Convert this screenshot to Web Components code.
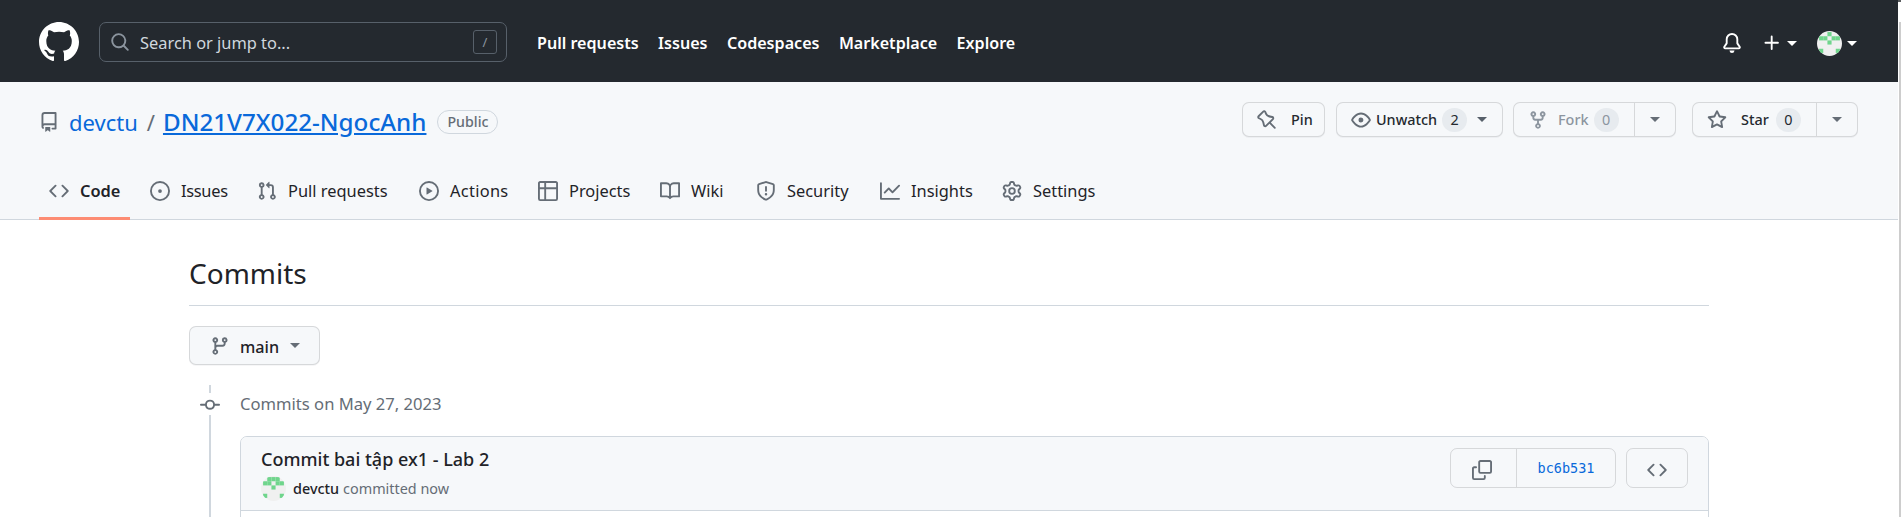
<!DOCTYPE html>
<html lang="en">
<head>
<meta charset="utf-8">
<title>Commits</title>
<style>
  html, body { margin: 0; height: 517px; overflow: hidden; background: #fff; }
  body { font-family: "Noto Sans", sans-serif; color: #1f2328; }
</style>
</head>
<body>
<gh-app>
  <gh-header></gh-header>
  <gh-repohead></gh-repohead>
  <gh-commits></gh-commits>
</gh-app>

<script>
const ICONS = {
  mark: 'M8 0c4.42 0 8 3.58 8 8a8.013 8.013 0 0 1-5.45 7.59c-.4.08-.55-.17-.55-.38 0-.27.01-1.13.01-2.2 0-.75-.25-1.23-.54-1.48 1.78-.2 3.65-.88 3.65-3.95 0-.88-.31-1.59-.82-2.15.08-.2.36-1.02-.08-2.12 0 0-.67-.22-2.2.82-.64-.18-1.32-.27-2-.27-.68 0-1.36.09-2 .27-1.53-1.03-2.2-.82-2.2-.82-.44 1.1-.16 1.92-.08 2.12-.51.56-.82 1.28-.82 2.15 0 3.06 1.86 3.75 3.64 3.95-.23.2-.44.55-.51 1.07-.46.21-1.61.55-2.33-.66-.15-.24-.6-.83-1.23-.82-.67.01-.27.38.01.53.34.19.73.9.82 1.13.16.45.68 1.31 2.69.94 0 .67.01 1.3.01 1.49 0 .21-.15.45-.55.38A7.995 7.995 0 0 1 0 8c0-4.42 3.58-8 8-8Z',
  repo: 'M2 2.5A2.5 2.5 0 0 1 4.5 0h8.75a.75.75 0 0 1 .75.75v12.5a.75.75 0 0 1-.75.75h-2.5a.75.75 0 0 1 0-1.5h1.75v-2h-8a1 1 0 0 0-.714 1.7.75.75 0 1 1-1.072 1.05A2.495 2.495 0 0 1 2 11.5Zm10.5-1h-8a1 1 0 0 0-1 1v6.708A2.486 2.486 0 0 1 4.5 9h8ZM5 12.25a.25.25 0 0 1 .25-.25h3.5a.25.25 0 0 1 .25.25v3.25a.25.25 0 0 1-.4.2l-1.45-1.087a.249.249 0 0 0-.3 0L5.4 15.7a.25.25 0 0 1-.4-.2Z',
  code: 'm11.28 3.22 4.25 4.25a.75.75 0 0 1 0 1.06l-4.25 4.25a.749.749 0 0 1-1.275-.326.749.749 0 0 1 .215-.734L13.94 8l-3.72-3.72a.749.749 0 0 1 .326-1.275.749.749 0 0 1 .734.215Zm-6.56 0a.751.751 0 0 1 1.042.018.751.751 0 0 1 .018 1.042L2.06 8l3.72 3.72a.749.749 0 0 1-.326 1.275.749.749 0 0 1-.734-.215L.47 8.53a.75.75 0 0 1 0-1.06Z',
  issue: 'M8 9.5a1.5 1.5 0 1 0 0-3 1.5 1.5 0 0 0 0 3ZM8 0a8 8 0 1 1 0 16A8 8 0 0 1 8 0ZM1.5 8a6.5 6.5 0 1 0 13 0 6.5 6.5 0 0 0-13 0Z',
  pr: 'M1.5 3.25a2.25 2.25 0 1 1 3 2.122v5.256a2.251 2.251 0 1 1-1.5 0V5.372A2.25 2.25 0 0 1 1.5 3.25Zm5.677-.177L9.573.677A.25.25 0 0 1 10 .854V2.5h1A2.5 2.5 0 0 1 13.5 5v5.628a2.251 2.251 0 1 1-1.5 0V5a1 1 0 0 0-1-1h-1v1.646a.25.25 0 0 1-.427.177L7.177 3.427a.25.25 0 0 1 0-.354ZM3.75 2.5a.75.75 0 1 0 0 1.5.75.75 0 0 0 0-1.5Zm0 9.5a.75.75 0 1 0 0 1.5.75.75 0 0 0 0-1.5Zm8.25.75a.75.75 0 1 0 1.5 0 .75.75 0 0 0-1.5 0Z',
  play: 'M8 0a8 8 0 1 1 0 16A8 8 0 0 1 8 0ZM1.5 8a6.5 6.5 0 1 0 13 0 6.5 6.5 0 0 0-13 0Zm4.879-2.773 4.264 2.559a.25.25 0 0 1 0 .428l-4.264 2.559A.25.25 0 0 1 6 10.559V5.442a.25.25 0 0 1 .379-.215Z',
  table: 'M0 1.75C0 .784.784 0 1.75 0h12.5C15.216 0 16 .784 16 1.75v12.5A1.75 1.75 0 0 1 14.25 16H1.75A1.75 1.75 0 0 1 0 14.25ZM6.5 6.5v8h7.75a.25.25 0 0 0 .25-.25V6.5Zm8-1.5V1.75a.25.25 0 0 0-.25-.25H6.5V5Zm-13 1.5v7.75c0 .138.112.25.25.25H5v-8ZM5 5V1.5H1.75a.25.25 0 0 0-.25.25V5Z',
  book: 'M0 1.75A.75.75 0 0 1 .75 1h4.253c1.227 0 2.317.59 3 1.501A3.743 3.743 0 0 1 11.006 1h4.245a.75.75 0 0 1 .75.75v10.5a.75.75 0 0 1-.75.75h-4.507a2.25 2.25 0 0 0-1.591.659l-.622.621a.75.75 0 0 1-1.06 0l-.622-.621A2.25 2.25 0 0 0 5.258 13H.75a.75.75 0 0 1-.75-.75Zm7.251 10.324.004-5.073-.002-2.253A2.25 2.25 0 0 0 5.003 2.5H1.5v9h3.757a3.75 3.75 0 0 1 1.994.574ZM8.755 4.75l-.004 7.322a3.752 3.752 0 0 1 1.992-.572H14.5v-9h-3.495a2.25 2.25 0 0 0-2.25 2.25Z',
  shield: 'M7.467.133a1.748 1.748 0 0 1 1.066 0l5.25 1.68A1.75 1.75 0 0 1 15 3.48V7c0 1.566-.32 3.182-1.303 4.682-.983 1.498-2.585 2.813-5.032 3.855a1.697 1.697 0 0 1-1.33 0c-2.447-1.042-4.049-2.357-5.032-3.855C1.32 10.182 1 8.566 1 7V3.48a1.75 1.75 0 0 1 1.217-1.667Zm.61 1.429a.25.25 0 0 0-.153 0l-5.25 1.68a.25.25 0 0 0-.174.238V7c0 1.358.275 2.666 1.057 3.86.784 1.194 2.121 2.34 4.366 3.297a.196.196 0 0 0 .154 0c2.245-.956 3.582-2.104 4.366-3.298C13.225 9.666 13.5 8.36 13.5 7V3.48a.251.251 0 0 0-.174-.237l-5.25-1.68ZM8.75 4.75v3a.75.75 0 0 1-1.5 0v-3a.75.75 0 0 1 1.5 0ZM9 10.5a1 1 0 1 1-2 0 1 1 0 0 1 2 0Z',
  graph: 'M1.5 1.75V13.5h13.75a.75.75 0 0 1 0 1.5H.75a.75.75 0 0 1-.75-.75V1.75a.75.75 0 0 1 1.5 0Zm14.28 2.53-5.25 5.25a.75.75 0 0 1-1.06 0L7 7.06 4.28 9.78a.751.751 0 0 1-1.042-.018.751.751 0 0 1-.018-1.042l3.25-3.25a.75.75 0 0 1 1.06 0L10 7.94l4.72-4.72a.751.751 0 0 1 1.042.018.751.751 0 0 1 .018 1.042Z',
  gear: 'M8 0a8.2 8.2 0 0 1 .701.031C9.444.095 9.99.645 10.16 1.29l.288 1.107c.018.066.079.158.212.224.231.114.454.243.668.386.123.082.233.09.299.071l1.103-.303c.644-.176 1.392.021 1.82.63.27.385.506.792.704 1.218.315.675.111 1.422-.364 1.891l-.814.806c-.049.048-.098.147-.088.294.016.257.016.515 0 .772-.01.147.038.246.088.294l.814.806c.475.469.679 1.216.364 1.891a7.977 7.977 0 0 1-.704 1.217c-.428.61-1.176.807-1.82.63l-1.102-.302c-.067-.019-.177-.011-.3.071a5.909 5.909 0 0 1-.668.386c-.133.066-.194.158-.211.224l-.29 1.106c-.168.646-.715 1.196-1.458 1.26a8.006 8.006 0 0 1-1.402 0c-.743-.064-1.289-.614-1.458-1.26l-.289-1.106c-.018-.066-.079-.158-.212-.224a5.738 5.738 0 0 1-.668-.386c-.123-.082-.233-.09-.299-.071l-1.103.303c-.644.176-1.392-.021-1.82-.63a8.12 8.12 0 0 1-.704-1.218c-.315-.675-.111-1.422.363-1.891l.815-.806c.05-.048.098-.147.088-.294a6.214 6.214 0 0 1 0-.772c.01-.147-.038-.246-.088-.294l-.815-.806C.635 6.045.431 5.298.746 4.623a7.92 7.92 0 0 1 .704-1.217c.428-.61 1.176-.807 1.82-.63l1.102.302c.067.019.177.011.3-.071.214-.143.437-.272.668-.386.133-.066.194-.158.211-.224l.29-1.106C6.009.645 6.556.095 7.299.03 7.53.01 7.764 0 8 0Zm-.571 1.525c-.036.003-.108.036-.137.146l-.289 1.105c-.147.561-.549.967-.998 1.189-.173.086-.34.183-.5.29-.417.278-.97.423-1.529.27l-1.103-.303c-.109-.03-.175.016-.195.045-.22.312-.412.644-.573.99-.014.031-.021.11.059.19l.815.806c.411.406.562.957.53 1.456a4.709 4.709 0 0 0 0 .582c.032.499-.119 1.05-.53 1.456l-.815.806c-.081.08-.073.159-.059.19.162.346.353.677.573.989.02.03.085.076.195.046l1.102-.303c.56-.153 1.113-.008 1.53.27.161.107.328.204.501.29.447.222.85.629.997 1.189l.289 1.105c.029.109.101.143.137.146a6.6 6.6 0 0 0 1.142 0c.036-.003.108-.036.137-.146l.289-1.105c.147-.561.549-.967.998-1.189.173-.086.34-.183.5-.29.417-.278.97-.423 1.529-.27l1.103.303c.109.029.175-.016.195-.045.22-.313.411-.644.573-.99.014-.031.021-.11-.059-.19l-.815-.806c-.411-.406-.562-.957-.53-1.456a4.709 4.709 0 0 0 0-.582c-.032-.499.119-1.05.53-1.456l.815-.806c.081-.08.073-.159.059-.19a6.464 6.464 0 0 0-.573-.989c-.02-.03-.085-.076-.195-.046l-1.102.303c-.56.153-1.113.008-1.53-.27a4.44 4.44 0 0 0-.501-.29c-.447-.222-.85-.629-.997-1.189l-.289-1.105c-.029-.11-.101-.143-.137-.146a6.6 6.6 0 0 0-1.142 0ZM11 8a3 3 0 1 1-6 0 3 3 0 0 1 6 0ZM9.5 8a1.5 1.5 0 1 0-3.001.001A1.5 1.5 0 0 0 9.5 8Z',
  pin: 'M4.456.734a1.75 1.75 0 0 1 2.826.504l.613 1.327a3.081 3.081 0 0 0 2.084 1.707l2.454.584c1.332.317 1.8 1.972.832 2.94L11.06 10l3.72 3.72a.748.748 0 0 1-.332 1.265.75.75 0 0 1-.729-.205L10 11.06l-2.204 2.205c-.968.968-2.623.5-2.94-.832l-.584-2.454a3.081 3.081 0 0 0-1.707-2.084l-1.327-.613a1.75 1.75 0 0 1-.504-2.826L4.456.734ZM5.92 1.866a.25.25 0 0 0-.404-.072L1.794 5.516a.25.25 0 0 0 .072.404l1.328.613A4.582 4.582 0 0 1 5.73 9.63l.584 2.454a.25.25 0 0 0 .42.12l5.47-5.47a.25.25 0 0 0-.12-.42L9.63 6.03a4.582 4.582 0 0 1-3.098-2.537Z',
  eye: 'M8 2c1.981 0 3.671.992 4.933 2.078 1.27 1.091 2.187 2.345 2.637 3.023a1.62 1.62 0 0 1 0 1.798c-.45.678-1.367 1.932-2.637 3.023C11.67 13.008 9.981 14 8 14c-1.981 0-3.671-.992-4.933-2.078C1.797 10.83.88 9.576.43 8.898a1.62 1.62 0 0 1 0-1.798c.45-.677 1.367-1.931 2.637-3.022C4.33 2.992 6.019 2 8 2ZM1.679 7.932a.12.12 0 0 0 0 .136c.411.622 1.241 1.75 2.366 2.717C5.176 11.758 6.527 12.5 8 12.5c1.473 0 2.825-.742 3.955-1.715 1.124-.967 1.954-2.096 2.366-2.717a.12.12 0 0 0 0-.136c-.412-.621-1.242-1.75-2.366-2.717C10.824 4.242 9.473 3.5 8 3.5c-1.473 0-2.825.742-3.955 1.715-1.124.967-1.954 2.096-2.366 2.717ZM8 10a2 2 0 1 1-.001-3.999A2 2 0 0 1 8 10Z',
  fork: 'M5 5.372v.878c0 .414.336.75.75.75h4.5a.75.75 0 0 0 .75-.75v-.878a2.25 2.25 0 1 1 1.5 0v.878a2.25 2.25 0 0 1-2.25 2.25h-1.5v2.128a2.251 2.251 0 1 1-1.5 0V8.5h-1.5A2.25 2.25 0 0 1 3.5 6.25v-.878a2.25 2.25 0 1 1 1.5 0ZM5 3.25a.75.75 0 1 0-1.5 0 .75.75 0 0 0 1.5 0Zm6.75.75a.75.75 0 1 0 0-1.5.75.75 0 0 0 0 1.5Zm-3 8.75a.75.75 0 1 0-1.5 0 .75.75 0 0 0 1.5 0Z',
  star: 'M8 .25a.75.75 0 0 1 .673.418l1.882 3.815 4.21.612a.75.75 0 0 1 .416 1.279l-3.046 2.97.719 4.192a.751.751 0 0 1-1.088.791L8 12.347l-3.766 1.98a.75.75 0 0 1-1.088-.79l.72-4.194L.818 6.374a.75.75 0 0 1 .416-1.28l4.21-.611L7.327.668A.75.75 0 0 1 8 .25Zm0 2.445L6.615 5.5a.75.75 0 0 1-.564.41l-3.097.45 2.24 2.184a.75.75 0 0 1 .216.664l-.528 3.084 2.769-1.456a.75.75 0 0 1 .698 0l2.77 1.456-.53-3.084a.75.75 0 0 1 .216-.664l2.24-2.183-3.096-.45a.75.75 0 0 1-.564-.41L8 2.694Z',
  branch: 'M9.5 3.25a2.25 2.25 0 1 1 3 2.122V6A2.5 2.5 0 0 1 10 8.5H6a1 1 0 0 0-1 1v1.128a2.251 2.251 0 1 1-1.5 0V5.372a2.25 2.25 0 1 1 1.5 0v1.836A2.493 2.493 0 0 1 6 7h4a1 1 0 0 0 1-1v-.628A2.25 2.25 0 0 1 9.5 3.25Zm-6 0a.75.75 0 1 0 1.5 0 .75.75 0 0 0-1.5 0Zm8.25-.75a.75.75 0 1 0 0 1.5.75.75 0 0 0 0-1.5ZM4.25 12a.75.75 0 1 0 0 1.5.75.75 0 0 0 0-1.5Z',
  commit: 'M11.93 8.5a4.002 4.002 0 0 1-7.86 0H.75a.75.75 0 0 1 0-1.5h3.32a4.002 4.002 0 0 1 7.86 0h3.32a.75.75 0 0 1 0 1.5Zm-1.43-.75a2.5 2.5 0 1 0-5 0 2.5 2.5 0 0 0 5 0Z',
  copy: 'M0 6.75C0 5.784.784 5 1.75 5h1.5a.75.75 0 0 1 0 1.5h-1.5a.25.25 0 0 0-.25.25v7.5c0 .138.112.25.25.25h7.5a.25.25 0 0 0 .25-.25v-1.5a.75.75 0 0 1 1.5 0v1.5A1.75 1.75 0 0 1 9.25 16h-7.5A1.75 1.75 0 0 1 0 14.25ZM5 1.75C5 .784 5.784 0 6.75 0h7.5C15.216 0 16 .784 16 1.75v7.5A1.75 1.75 0 0 1 14.25 11h-7.5A1.75 1.75 0 0 1 5 9.25Zm1.75-.25a.25.25 0 0 0-.25.25v7.5c0 .138.112.25.25.25h7.5a.25.25 0 0 0 .25-.25v-7.5a.25.25 0 0 0-.25-.25Z',
  bell: 'M8 16a2 2 0 0 0 1.985-1.75c.017-.137-.097-.25-.235-.25h-3.5c-.138 0-.252.113-.235.25A2 2 0 0 0 8 16ZM3 5a5 5 0 0 1 10 0v2.947c0 .05.015.098.042.139l1.703 2.555A1.519 1.519 0 0 1 13.482 13H2.518a1.516 1.516 0 0 1-1.263-2.36l1.703-2.554A.255.255 0 0 0 3 7.947Zm5-3.5A3.5 3.5 0 0 0 4.5 5v2.947c0 .346-.102.683-.294.97l-1.703 2.556a.017.017 0 0 0-.003.01l.001.006c0 .002.002.004.004.006l.006.004.007.001h10.964l.007-.001.006-.004.004-.006.001-.007a.017.017 0 0 0-.003-.01l-1.703-2.554a1.745 1.745 0 0 1-.294-.97V5A3.5 3.5 0 0 0 8 1.5Z',
  plus: 'M7.75 2a.75.75 0 0 1 .75.75V7h4.25a.75.75 0 0 1 0 1.5H8.5v4.25a.75.75 0 0 1-1.5 0V8.5H2.75a.75.75 0 0 1 0-1.5H7V2.75A.75.75 0 0 1 7.75 2Z',
  search: 'M10.68 11.74a6 6 0 0 1-7.922-8.982 6 6 0 0 1 8.982 7.922l3.04 3.04a.749.749 0 0 1-.326 1.275.749.749 0 0 1-.734-.215ZM11.5 7a4.499 4.499 0 1 0-8.997 0A4.499 4.499 0 0 0 11.5 7Z'
};

// small helper, every component here is just a shadow root + innerHTML
class Base extends HTMLElement {
  constructor() {
    super();
    this.attachShadow({ mode: 'open' });
  }
}

class GhIcon extends Base {
  connectedCallback() {
    const size = this.getAttribute('size') || 20;
    this.shadowRoot.innerHTML = `
      <style>:host { display: inline-flex; flex: none; } svg { display: block; fill: currentColor; }</style>
      <svg width="${size}" height="${size}" viewBox="0 0 16 16"><path d="${ICONS[this.getAttribute('name')]}"/></svg>`;
  }
}

class GhCaret extends Base {
  connectedCallback() {
    this.shadowRoot.innerHTML = `
      <style>
        :host { display: inline-block; flex: none; width: 0; height: 0;
          border-top: 5px solid currentColor; border-left: 5px solid transparent; border-right: 5px solid transparent; }
      </style>`;
  }
}

class GhAvatar extends Base {
  connectedCallback() {
    const size = this.getAttribute('size') || 25;
    // identicon cells, sits a bit high in the circle like the reference
    const cells = [[2,0],[0,1],[1,1],[3,1],[4,1],[2,2],[0,4],[4,4]];
    if (this.hasAttribute('wide')) cells.push([1,0],[3,0]);
    const rects = cells.map(([c, r]) => `<rect x="${35 + c * 70}" y="${18 + r * 70}" width="70" height="70"/>`).join('');
    this.shadowRoot.innerHTML = `
      <style>
        :host { display: inline-flex; flex: none; }
        svg { display: block; border-radius: 50%; background: #f0f0f0; fill: #6fd58c; }
      </style>
      <svg width="${size}" height="${size}" viewBox="0 0 420 420">${rects}</svg>`;
  }
}

class GhHeader extends Base {
  connectedCallback() {
    const links = ['Pull requests', 'Issues', 'Codespaces', 'Marketplace', 'Explore'];
    this.shadowRoot.innerHTML = `
      <style>
        :host { display: flex; align-items: center; box-sizing: border-box; height: 82px;
          padding: 2px 41px 0 39px; background: #24292f; color: #fff; }
        .search { display: flex; align-items: center; box-sizing: border-box; width: 408px; height: 40px;
          margin-left: 20px; padding: 0 9px 0 10px; border: 1px solid #57606a; border-radius: 7px; color: #d0d7de; }
        .search gh-icon { color: #8b949e; }
        .search span { flex: 1; margin-left: 10px; font-size: 16.4px; }
        kbd { display: flex; align-items: center; justify-content: center; box-sizing: border-box; width: 24px; height: 24px;
          border: 1px solid #57606a; border-radius: 3px; color: #8b949e; font: 13px "Noto Sans", sans-serif; }
        nav { display: flex; gap: 19.4px; margin-left: 30px; padding-top: 1px; font-size: 16.1px; font-weight: 600; }
        .right { display: flex; align-items: center; margin-left: auto; padding-top: 2px; }
        .plus { margin-left: 20px; }
        .c1 { margin-left: 5px; }
        .avatar { margin-left: 20px; }
        .c2 { margin-left: 5px; }
      </style>
      <gh-icon name="mark" size="40"></gh-icon>
      <div class="search">
        <gh-icon name="search" size="20"></gh-icon>
        <span>Search or jump to...</span>
        <kbd>/</kbd>
      </div>
      <nav>${links.map(l => `<span>${l}</span>`).join('')}</nav>
      <div class="right">
        <gh-icon name="bell"></gh-icon>
        <gh-icon class="plus" name="plus"></gh-icon>
        <gh-caret class="c1"></gh-caret>
        <gh-avatar class="avatar"></gh-avatar>
        <gh-caret class="c2"></gh-caret>
      </div>`;
  }
}

// button with optional counter and optional split caret
class GhButton extends Base {
  connectedCallback() {
    const icon = this.getAttribute('icon');
    const count = this.getAttribute('count');
    const split = this.hasAttribute('split');
    const caret = this.hasAttribute('caret');
    const gap = this.getAttribute('gap') || 10;
    this.shadowRoot.innerHTML = `
      <style>
        :host { display: inline-flex; box-sizing: border-box; height: 35px; border: 1px solid rgba(31,35,40,.15);
          border-radius: 7px; background: #f6f8fa; box-shadow: 0 1px 0 rgba(31,35,40,.04);
          font-size: 14.4px; font-weight: 500; color: #24292f; }
        :host([disabled]) .main { color: #8c959f; }
        .main { display: flex; align-items: center; flex: 1; padding: 0 12px 0 14px; }
        gh-icon { color: #656d76; margin-right: ${gap}px; }
        :host([disabled]) gh-icon { color: #8c959f; }
        .count { display: flex; align-items: center; justify-content: center; width: 25px; height: 24px; margin-left: var(--count-gap, 7px);
          border-radius: 12px; background: rgba(175,184,193,.2); font-weight: 400; }
        .more { display: flex; align-items: center; justify-content: center; width: 40px; border-left: 1px solid rgba(31,35,40,.15); color: #656d76; }
        .inline { margin-left: 10px; color: #57606a; }
      </style>
      <div class="main">
        <gh-icon name="${icon}"></gh-icon><span>${this.getAttribute('label')}</span>
        ${count ? `<span class="count">${count}</span>` : ''}
        ${caret ? '<gh-caret class="inline"></gh-caret>' : ''}
      </div>
      ${split ? '<div class="more"><gh-caret></gh-caret></div>' : ''}`;
  }
}

class GhTab extends Base {
  connectedCallback() {
    // w = label box width, the tab row keeps the reference spacing with it
    this.shadowRoot.innerHTML = `
      <style>
        :host { display: flex; align-items: center; box-sizing: border-box; height: 41px; gap: 11px;
          padding: 0 10px 14px; border-bottom: 3px solid transparent; font-size: 16.4px; color: #1f2328; }
        :host([active]) { border-bottom-color: #fd8c73; font-weight: 600; }
        gh-icon { color: #656d76; }
        .label { width: ${this.getAttribute('w')}px; margin-bottom: 2px; white-space: nowrap; letter-spacing: ${this.getAttribute('ls') || 0}px; }
      </style>
      <gh-icon name="${this.getAttribute('icon')}"></gh-icon><span class="label"><slot></slot></span>`;
  }
}

class GhRepohead extends Base {
  connectedCallback() {
    this.shadowRoot.innerHTML = `
      <style>
        :host { display: block; box-sizing: border-box; height: 138px; padding-top: 20px;
          background: #f6f8fa; border-bottom: 1px solid #d0d7de; }
        .top { display: flex; justify-content: space-between; height: 35px; padding: 0 40px 0 39px; }
        .title { display: flex; align-items: center; padding-top: 4px; font-size: 22px; color: #656d76; }
        .title gh-icon { margin-right: 10px; }
        a { color: #0969da; text-decoration: none; }
        a.repo { font-size: 24.2px; font-weight: 500; text-decoration: underline; }
        .sep { margin: 0 8px 0 9px; }
        .badge { margin-left: 11px; padding: 0 9px; border: 1px solid #d0d7de; border-radius: 13px;
          font-size: 14.2px; line-height: 22px; font-weight: 500; color: #656d76; }
        .actions { display: flex; gap: 10px; }
        .watch { margin-left: 1px; }
        .star { margin-left: 6px; }
        nav { display: flex; gap: 10px; margin-top: 42px; padding-left: 39px; }
      </style>
      <div class="top">
        <div class="title">
          <gh-icon name="repo"></gh-icon>
          <a href="#">devctu</a><span class="sep">/</span><a class="repo" href="#">DN21V7X022-NgocAnh</a>
          <span class="badge">Public</span>
        </div>
        <div class="actions">
          <gh-button icon="pin" label="Pin" gap="14" style="width:83px"></gh-button>
          <gh-button class="watch" icon="eye" label="Unwatch" gap="5" count="2" caret style="width:167px;--count-gap:5px"></gh-button>
          <gh-button icon="fork" label="Fork" count="0" split disabled style="width:163px;--count-gap:5px"></gh-button>
          <gh-button class="star" icon="star" label="Star" gap="14" count="0" split style="width:166px"></gh-button>
        </div>
      </div>
      <nav>
        <gh-tab icon="code" active w="40">Code</gh-tab>
        <gh-tab icon="issue" w="46" ls="-.3">Issues</gh-tab>
        <gh-tab icon="pr" w="101">Pull requests</gh-tab>
        <gh-tab icon="play" w="58" ls=".3">Actions</gh-tab>
        <gh-tab icon="table" w="61">Projects</gh-tab>
        <gh-tab icon="book" w="35">Wiki</gh-tab>
        <gh-tab icon="shield" w="63">Security</gh-tab>
        <gh-tab icon="graph" w="61">Insights</gh-tab>
        <gh-tab icon="gear" w="61">Settings</gh-tab>
      </nav>`;
  }
}

class GhCommit extends Base {
  connectedCallback() {
    this.shadowRoot.innerHTML = `
      <style>
        :host { display: block; margin-left: 51px; height: 120px; box-sizing: border-box;
          border: 1px solid #d0d7de; border-radius: 7px 7px 0 0; }
        .head { display: flex; justify-content: space-between; align-items: flex-start; box-sizing: border-box; height: 74px;
          padding: 11px 20px 0; background: #f6f8fa; border-bottom: 1px solid #d0d7de; border-radius: 6px 6px 0 0; }
        .msg { margin-top: -1px; font-size: 18px; font-weight: 500; line-height: 24px; }
        .meta { display: flex; align-items: center; margin-top: 5px; font-size: 14.4px; color: #656d76; }
        .meta b { margin: 0 4px 0 7px; font-weight: 500; color: #1f2328; }
        .tools { display: flex; gap: 10px; }
        .group { display: flex; height: 40px; box-sizing: border-box; border: 1px solid rgba(31,35,40,.15); border-radius: 7px; }
        .group div { display: flex; align-items: center; justify-content: center; color: #656d76; }
        .copy { box-sizing: border-box; width: 66px; padding: 3px 4px 0 0; border-right: 1px solid rgba(31,35,40,.15); }
        .sha { width: 98px; font: 13.5px "DejaVu Sans Mono", monospace; }
        .sha span { color: #0969da; }
        .view { width: 60px; padding-top: 3px; box-sizing: border-box; }
      </style>
      <div class="head">
        <div>
          <div class="msg"><slot></slot></div>
          <div class="meta"><gh-avatar size="25" wide></gh-avatar><b>devctu</b> committed now</div>
        </div>
        <div class="tools">
          <div class="group">
            <div class="copy"><gh-icon name="copy"></gh-icon></div>
            <div class="sha"><span>bc6b531</span></div>
          </div>
          <div class="group"><div class="view"><gh-icon name="code"></gh-icon></div></div>
        </div>
      </div>`;
  }
}

class GhCommits extends Base {
  connectedCallback() {
    this.shadowRoot.innerHTML = `
      <style>
        :host { display: block; box-sizing: border-box; width: 1520px; margin-left: 189px; }
        h2 { margin: 0; box-sizing: border-box; height: 86px; padding-top: 33px; border-bottom: 1px solid #d0d7de;
          font-size: 28px; line-height: 40px; font-weight: 400; }
        .branch { display: inline-flex; align-items: center; box-sizing: border-box; height: 39px; margin-top: 20px; width: 131px;
          padding-left: 19.5px; border: 1px solid rgba(31,35,40,.15); border-radius: 7px; background: #f6f8fa;
          box-shadow: 0 1px 0 rgba(31,35,40,.04); font-size: 16.2px; font-weight: 500; }
        .branch gh-icon { color: #656d76; margin-right: 10.5px; }
        .branch span { padding-top: 2px; }
        .branch gh-caret { margin-left: 11px; color: #656d76; }
        .timeline { position: relative; margin-top: 20px; }
        .timeline::before { content: ""; position: absolute; left: 20px; top: 0; bottom: 0; width: 2px; background: #d0d7de; }
        .date { position: relative; display: flex; align-items: center; height: 40px; margin-bottom: 11px; padding-left: 11px; box-sizing: border-box;
          font-size: 16.6px; color: #656d76; }
        .date gh-icon { color: #656d76; background: #fff; box-shadow: 0 -2px 0 #fff; margin-right: 20px; }
        .date span { margin-bottom: 3px; }
        .timeline gh-commit { position: relative; background: #fff; }
      </style>
      <h2>Commits</h2>
      <div class="branch"><gh-icon name="branch" size="20"></gh-icon><span>main</span><gh-caret></gh-caret></div>
      <div class="timeline">
        <div class="date"><gh-icon name="commit"></gh-icon><span>Commits on May 27, 2023</span></div>
        <gh-commit>Commit bai tập ex1 - Lab 2</gh-commit>
      </div>`;
  }
}

class GhApp extends Base {
  connectedCallback() {
    this.shadowRoot.innerHTML = `
      <style>
        :host { display: block; position: relative; height: 517px; overflow: hidden; }
        .top { height: 2px; background: #5a5d60; }
        .page { display: flex; height: 515px; }
        main { width: 1898px; margin-top: -2px; flex: none; }
        .bar { width: 3px; flex: none; border-left: 1px solid #fff; box-sizing: border-box; background: #cdcdcd; margin-top: 20px; }
      </style>
      <div class="top"></div>
      <div class="page">
        <main><slot></slot></main>
        <div class="bar"></div>
      </div>`;
  }
}

customElements.define('gh-icon', GhIcon);
customElements.define('gh-caret', GhCaret);
customElements.define('gh-avatar', GhAvatar);
customElements.define('gh-header', GhHeader);
customElements.define('gh-button', GhButton);
customElements.define('gh-tab', GhTab);
customElements.define('gh-repohead', GhRepohead);
customElements.define('gh-commit', GhCommit);
customElements.define('gh-commits', GhCommits);
customElements.define('gh-app', GhApp);
</script>
</body>
</html>
